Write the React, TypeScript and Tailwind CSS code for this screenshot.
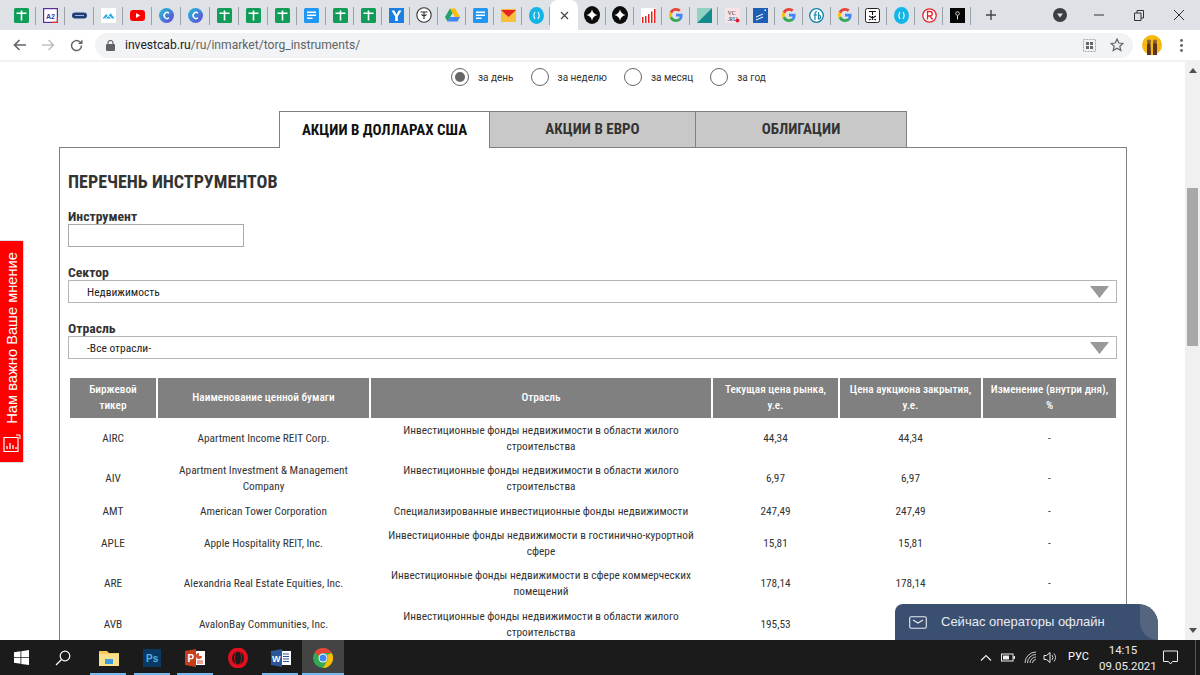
import React from "react";

const Sheet = () => (
  <svg width="15" height="15" viewBox="0 0 15 15"><rect width="15" height="15" rx="1.5" fill="#0f9d58" /><path d="M6.700 2.500h1.600v2H12.500v1.600H8.300v6.400H6.700V6.100H2.500V4.500h4.200z" fill="#fff" /></svg>
);
const Doc = () => (
  <svg width="15" height="15" viewBox="0 0 15 15"><rect width="15" height="15" rx="1.5" fill="#2196f3" /><path d="M3 3.5h9v1.5H3zM3 6.5h9V8H3zM3 9.5h5.5V11H3z" fill="#fff" /></svg>
);
const Canva = () => (
  <svg width="15" height="15" viewBox="0 0 15 15"><defs><linearGradient id="cg" x1="0" y1="0" x2="1" y2="1"><stop offset="0" stopColor="#1fc4d6" /><stop offset="1" stopColor="#6a3fd8" /></linearGradient></defs><circle cx="7.5" cy="7.5" r="7.5" fill="url(#cg)" /><path d="M10 5.2A3 3 0 1 0 10 9.8" fill="none" stroke="#fff" strokeWidth="1.4" /></svg>
);
const GLogo = () => (
  <svg width="14" height="14" viewBox="0 0 48 48">
    <path fill="#EA4335" d="M24 9.5c3.5 0 6.700 1.300 9.100 3.500l6.800-6.800C35.800 2.400 30.300 0 24 0 14.600 0 6.500 5.400 2.600 13.200l7.900 6.100C12.400 13.700 17.700 9.500 24 9.500z" />
    <path fill="#4285F4" d="M46.500 24.500c0-1.600-.1-3.100-.4-4.500H24v9h12.700c-.6 3-2.200 5.500-4.700 7.200l7.700 6c4.400-4.100 6.800-10.200 6.800-17.700z" />
    <path fill="#FBBC05" d="M10.500 28.700c-.5-1.400-.8-3-.8-4.700s.3-3.200.8-4.700l-7.900-6.100C1 16.500 0 20.100 0 24s1 7.500 2.600 10.800l7.900-6.100z" />
    <path fill="#34A853" d="M24 48c6.500 0 11.900-2.100 15.900-5.800l-7.700-6c-2.100 1.400-4.900 2.300-8.200 2.300-6.300 0-11.600-4.200-13.500-9.800l-7.900 6.100C6.500 42.600 14.600 48 24 48z" />
  </svg>
);
const BlueRing = () => (
  <svg width="15" height="17" viewBox="0 0 15 17"><ellipse cx="7.500" cy="8.500" rx="7.500" ry="8.500" fill="#12b5e5" /><path d="M6 5C4.700 7 4.700 10 6 12M9 5c1.300 2 1.300 5 0 7" fill="none" stroke="#fff" strokeWidth="1.100" /></svg>
);
const BlackStar = () => (
  <svg width="16" height="18" viewBox="0 0 16 18"><ellipse cx="8" cy="9" rx="8" ry="9" fill="#0c0c0c" /><path d="M8 3.500 9.500 7.500 13.500 9 9.500 10.500 8 14.500 6.500 10.500 2.500 9 6.500 7.500z" fill="#fff" /><circle cx="8" cy="9" r="2.800" fill="#fff" /></svg>
);

const icons: React.ReactNode[] = [
  <Sheet />,
  <svg width="15" height="15" viewBox="0 0 15 15"><rect x=".6" y=".6" width="13.800" height="13.800" fill="#fff" stroke="#5b2d9c" strokeWidth="1.200" /><path d="M14.400 9v5.400H9" fill="none" stroke="#e5342b" strokeWidth="1.200" /><text x="3" y="10.500" fontSize="7" fontWeight="700" fill="#3a3a9c" fontFamily="Liberation Sans">A2</text></svg>,
  <svg width="15" height="15" viewBox="0 0 15 15"><rect y="4.500" width="15" height="6" rx="3" fill="#1e3f7a" /><path d="M3 7.500h9" stroke="#9db7e0" strokeWidth="1" /></svg>,
  <svg width="15" height="15" viewBox="0 0 15 15"><rect width="15" height="15" fill="#fff" /><path d="M1.500 10.500 5 6l2.500 2.500L9.500 5l4 5.500z" fill="#2aa8e6" /><path d="M3.500 11l4-3.300 4 3.300" fill="none" stroke="#fff" strokeWidth="1" /></svg>,
  <svg width="15" height="15" viewBox="0 0 15 15"><rect y="2" width="15" height="11" rx="3" fill="#f00" /><path d="M6 5v5l4.200-2.500z" fill="#fff" /></svg>,
  <Canva />, <Canva />, <Sheet />, <Sheet />, <Sheet />, <Doc />, <Sheet />, <Sheet />,
  <svg width="15" height="15" viewBox="0 0 15 15"><rect width="15" height="15" fill="#1a7fe0" /><path d="M2.500 2.500h2.800l2.200 4 2.200-4h2.800L8.800 8.500v4.500H6.200V8.500z" fill="#fff" /></svg>,
  <svg width="16" height="16" viewBox="0 0 16 16"><circle cx="8" cy="8" r="7.200" fill="#fff" stroke="#333" strokeWidth="1.100" /><path d="M4.500 5h7M8 5v7M5.500 7.500c1.500 1.300 3.500 1.300 5 0" fill="none" stroke="#333" strokeWidth="1.100" /></svg>,
  <svg width="15" height="14" viewBox="0 0 15 14"><path d="M5 .5h5L15 9l-2.500 4.500L7.500 5z" fill="#fbbc04" /><path d="M5 .5 0 9l2.500 4.500L7.500 5z" fill="#1fa463" /><path d="M2.500 13.500h10L15 9H5z" fill="#4285f4" /></svg>,
  <Doc />,
  <svg width="15" height="15" viewBox="0 0 15 15"><rect y="1" width="15" height="13" fill="#f6bf3c" /><path d="M0 2h15L7.500 9z" fill="#e8231f" /></svg>,
  <BlueRing />,
];
const icons2: React.ReactNode[] = [
  <BlackStar />, <BlackStar />,
  <svg width="15" height="15" viewBox="0 0 15 15"><rect width="15" height="15" fill="#fff" /><path d="M1 9h1.500v6H1zM4 8h1.500v7H4zM7 6h1.500v9H7zM10 3.500h1.500V15H10zM13 1h1.500v14H13z" fill="#e52222" /></svg>,
  <GLogo />,
  <svg width="15" height="15" viewBox="0 0 15 15"><path d="M0 0h15L0 15z" fill="#8fd3c0" /><path d="M15 0v15H0z" fill="#138a8e" /></svg>,
  <svg width="15" height="15" viewBox="0 0 15 15"><rect width="15" height="15" fill="#f8e3e6" /><text x="2.500" y="6.500" fontSize="6" fontFamily="Liberation Serif" fill="#333">VC</text><text x="2.500" y="12.500" fontSize="6" fontFamily="Liberation Serif" fill="#333">.RU</text><circle cx="12.500" cy="12.500" r="2" fill="#e01b2f" /></svg>,
  <svg width="15" height="15" viewBox="0 0 15 15"><rect width="15" height="15" fill="#1d5fb4" /><path d="M3 9l7-3M3 12l7-3" stroke="#fff" strokeWidth="1" /><rect x="11.500" y="1.500" width="1.500" height="1.500" fill="#fff" /></svg>,
  <GLogo />,
  <svg width="15" height="15" viewBox="0 0 15 15"><circle cx="7.500" cy="7.500" r="6.800" fill="#fff" stroke="#0e7fa8" strokeWidth="1.300" /><path d="M6 12V6c0-2 1-2.500 2-2.500M4.500 7H8M9.500 4v7c1.800 0 2-1 2-2s-.5-2-2-2" fill="none" stroke="#0e7fa8" strokeWidth="1.100" /></svg>,
  <GLogo />,
  <svg width="15" height="15" viewBox="0 0 15 15"><rect x=".5" y=".5" width="14" height="14" rx="2" fill="#fff" stroke="#222" /><path d="M4 3.500h7M7.500 3.500V7M4 8l7 4M11 8l-7 4M7.500 8v4" stroke="#111" strokeWidth="1.100" /></svg>,
  <BlueRing />,
  <svg width="15" height="15" viewBox="0 0 15 15"><circle cx="7.500" cy="7.500" r="6.700" fill="#fff" stroke="#e0262c" strokeWidth="1.300" /><path d="M5.500 11.500v-8h2.500a2.200 2.200 0 0 1 0 4.500H5.500M8 8l2.500 3.500" fill="none" stroke="#e0262c" strokeWidth="1.300" /></svg>,
  <svg width="15" height="15" viewBox="0 0 15 15"><rect width="15" height="15" fill="#050505" /><circle cx="7.500" cy="5.500" r="1.800" fill="none" stroke="#ddd" strokeWidth=".9" /><path d="M7.500 7.500v4" stroke="#ddd" /></svg>,
];

const Fav = ({ children, w }: { children: React.ReactNode; w: string }) => (
  <div className={`flex items-center justify-center h-[30px] relative shrink-0 ${w}`}>
    {children}
    <span className="absolute right-0 top-[7px] h-[18px] w-px bg-[#9aa0a6]" />
  </div>
);

const rows = [
  ["AIRC", "Apartment Income REIT Corp.", "Инвестиционные фонды недвижимости в области жилого строительства", "44,34", "44,34", "-", "h-[41px]"],
  ["AIV", "Apartment Investment & Management Company", "Инвестиционные фонды недвижимости в области жилого строительства", "6,97", "6,97", "-", "h-[40px]"],
  ["AMT", "American Tower Corporation", "Специализированные инвестиционные фонды недвижимости", "247,49", "247,49", "-", "h-[25px]"],
  ["APLE", "Apple Hospitality REIT, Inc.", "Инвестиционные фонды недвижимости в гостинично-курортной сфере", "15,81", "15,81", "-", "h-[40px]"],
  ["ARE", "Alexandria Real Estate Equities, Inc.", "Инвестиционные фонды недвижимости в сфере коммерческих помещений", "178,14", "178,14", "-", "h-[40px]"],
  ["AVB", "AvalonBay Communities, Inc.", "Инвестиционные фонды недвижимости в области жилого строительства", "195,53", "195,53", "-", "h-[41px]"],
];
const heads = ["Биржевой тикер", "Наименование ценной бумаги", "Отрасль", "Текущая цена рынка, у.е.", "Цена аукциона закрытия, у.е.", "Изменение (внутри дня), %"];
const widths = ["w-[86px]", "w-[211px]", "w-[340px]", "w-[125px]", "w-[141px]", "w-[133px]"];

const Radio = ({ label, on }: { label: string; on?: boolean }) => (
  <div className="flex items-center gap-[9px]">
    <span className="w-[18px] h-[18px] rounded-full border border-[#666] flex items-center justify-center bg-white">
      {on && <span className="w-[10px] h-[10px] rounded-full bg-[#666]" />}
    </span>
    <span className="text-[10px] text-[#333] [font-stretch:100%]">{label}</span>
  </div>
);

const Select = ({ value }: { value: string }) => (
  <div className="w-[1049px] h-[23px] border border-[#b5b5b5] flex items-center justify-between pl-[18px] pr-[7px] text-[11.500px] text-[#222]">
    <span className="pt-[2px]">{value}</span>
    <svg width="19" height="12" viewBox="0 0 19 12"><path d="M0 0h19L9.500 12z" fill="#999" /></svg>
  </div>
);

export default function App() {
  return (
    <div className="w-[1200px] h-[675px] relative overflow-hidden flex flex-col bg-white font-['Roboto',sans-serif] [font-stretch:75%]">
      {/* tabs */}
      <div className="h-[30px] bg-[#dee1e6] flex items-center pl-[7px] shrink-0">
        <div className="flex">
          {icons.map((ic, i) => (
            <Fav key={i} w={i < 11 ? "w-[29px]" : "w-[28px]"}>{ic}</Fav>
          ))}
        </div>
        <div className="w-[28px] h-[30px] bg-white rounded-t-[8px] flex items-center justify-center shrink-0">
          <svg width="9" height="9" viewBox="0 0 9 9"><path d="M1 1l7 7M8 1 1 8" stroke="#444" strokeWidth="1.200" /></svg>
        </div>
        <div className="flex">
          {icons2.map((ic, i) => (
            <Fav key={i} w="w-[28.100px]">{ic}</Fav>
          ))}
        </div>
        <svg className="ml-[14px]" width="12" height="12" viewBox="0 0 12 12"><path d="M6 1v10M1 6h10" stroke="#444" strokeWidth="1.400" /></svg>
        <svg className="ml-[56px]" width="14" height="14" viewBox="0 0 14 14"><circle cx="7" cy="7" r="7" fill="#3c4043" /><path d="M4 5.500h6L7 9.500z" fill="#dee1e6" /></svg>
        <svg className="ml-[27px]" width="10" height="10" viewBox="0 0 10 10"><path d="M0 5h10" stroke="#333" /></svg>
        <svg className="ml-[30px]" width="10" height="11" viewBox="0 0 10 11"><path d="M.5 3h6.500v7.500H.5zM3 3V.5h6.500V8H7" fill="none" stroke="#333" /></svg>
        <svg className="ml-[30px]" width="10" height="10" viewBox="0 0 10 10"><path d="M0 0l10 10M10 0 0 10" stroke="#333" /></svg>
      </div>
      {/* toolbar */}
      <div className="h-[30px] bg-white flex items-center shrink-0 pl-[13px]">
        <svg width="13" height="12" viewBox="0 0 13 12"><path d="M13 6H1.500M6.500 1l-5 5 5 5" fill="none" stroke="#5f6368" strokeWidth="1.600" /></svg>
        <svg className="ml-[16px]" width="13" height="12" viewBox="0 0 13 12"><path d="M0 6h11.500M6.500 1l5 5-5 5" fill="none" stroke="#bdc1c6" strokeWidth="1.600" /></svg>
        <svg className="ml-[15px]" width="13" height="13" viewBox="0 0 13 13"><path d="M11.500 6.500a5 5 0 1 1-1.500-3.500" fill="none" stroke="#5f6368" strokeWidth="1.500" /><path d="M12.500 .5v4.500H8z" fill="#5f6368" /></svg>
        <div className="ml-[12px] w-[1038px] h-[25px] rounded-full bg-[#f1f3f4] flex items-center pl-[11px] pr-[9px]">
          <svg width="9" height="11" viewBox="0 0 9 11"><rect y="4" width="9" height="7" rx="1" fill="#5f6368" /><path d="M2 4.500V3a2.500 2.500 0 0 1 5 0v1.500" fill="none" stroke="#5f6368" strokeWidth="1.100" /></svg>
          <span className="ml-[10px] text-[12.100px] [font-stretch:100%] text-[#5f6368]"><span className="text-[#202124]">investcab.ru</span>/ru/inmarket/torg_instruments/</span>
          <svg className="ml-auto" width="13" height="13" viewBox="0 0 13 13"><rect x=".5" y=".5" width="12" height="12" fill="none" stroke="#aaa" strokeDasharray="2 1" /><path d="M3 3h3v3H3zM7 3h3v3H7zM3 7h3v3H3zM7 7h3v3H7z" fill="#666" /></svg>
          <svg className="ml-[14px]" width="14" height="14" viewBox="0 0 14 14"><path d="M7 1l1.800 4 4.200.4-3.200 2.800 1 4.300L7 10.300 3.200 12.500l1-4.300L1 5.400 5.200 5z" fill="none" stroke="#5f6368" strokeWidth="1.200" /></svg>
        </div>
        <svg className="ml-[9px]" width="20" height="20" viewBox="0 0 20 20"><circle cx="10" cy="10" r="10" fill="#f5b80f" /><path d="M5 20V10c0-3 3-3.500 3.500-1l.5 11zM11 20V9c.5-3 4-2.500 4 1v10z" fill="#5a3326" /><circle cx="7" cy="6.500" r="2" fill="#8a5a3c" /><circle cx="13" cy="6.500" r="2" fill="#8a5a3c" /></svg>
        <svg className="ml-[18px]" width="3" height="13" viewBox="0 0 3 13"><circle cx="1.500" cy="1.500" r="1.400" fill="#5f6368" /><circle cx="1.500" cy="6.500" r="1.400" fill="#5f6368" /><circle cx="1.500" cy="11.500" r="1.400" fill="#5f6368" /></svg>
      </div>
      <div className="h-[2px] bg-[#f1f1f1] shrink-0" />

      {/* page */}
      <div className="flex-1 flex min-h-0">
        <div className="flex-1 min-w-0 overflow-hidden bg-white">
          <div className="h-[20px] mt-[5px] flex ml-[451px] gap-[17px]">
            <Radio label="за день" on />
            <Radio label="за неделю" />
            <Radio label="за месяц" />
            <Radio label="за год" />
          </div>
          <div className="ml-[279px] mt-[24px] flex h-[37px] relative z-10 w-[628px] -mb-px">
            <div className="w-[210px] border-t border-l border-[#808080] bg-white flex items-center justify-center font-bold text-[15px] text-[#111]">АКЦИИ В ДОЛЛАРАХ США</div>
            <div className="w-[207px] border-t border-x border-b border-[#808080] bg-[#c8c8c8] flex items-center justify-center font-bold text-[15px] text-[#333]">АКЦИИ В ЕВРО</div>
            <div className="w-[211px] border-t border-r border-b border-[#808080] bg-[#c8c8c8] flex items-center justify-center font-bold text-[15px] text-[#333]">ОБЛИГАЦИИ</div>
          </div>
          <div className="ml-[59px] w-[1068px] border border-[#808080] px-[8px] pt-[23px] pb-[20px]">
            <h2 className="text-[18px] leading-[22px] font-bold text-[#333]">ПЕРЕЧЕНЬ ИНСТРУМЕНТОВ</h2>
            <div className="mt-[9px] pt-[6px] text-[13.700px] leading-[16px] font-bold text-[#333]">Инструмент</div>
            <div className="w-[176px] h-[23px] border border-[#aaa]" />
            <div className="mt-[11px] pt-[6px] text-[13.700px] leading-[16px] font-bold text-[#333]">Сектор</div>
            <Select value="Недвижимость" />
            <div className="mt-[11px] pt-[6px] text-[13.700px] leading-[16px] font-bold text-[#333]">Отрасль</div>
            <Select value="-Все отрасли-" />
            <table className="mt-[19px] border-separate border-spacing-x-[2px] border-spacing-y-0 table-fixed w-[1050px] text-[11.300px] leading-[16px] text-[#333]">
              <thead>
                <tr className="h-[40px]">
                  {heads.map((h, i) => (
                    <th key={i} className={`${widths[i]} bg-[#808080] text-white font-medium px-[6px] text-center align-middle`}>{h}</th>
                  ))}
                </tr>
              </thead>
              <tbody>
                {rows.map((r) => (
                  <tr key={r[0]} className={r[6]}>
                    {r.slice(0, 6).map((c, i) => (
                      <td key={i} className="text-center align-middle px-[8px]">{c}</td>
                    ))}
                  </tr>
                ))}
              </tbody>
            </table>
          </div>
        </div>
        {/* scrollbar */}
        <div className="w-[15px] bg-[#f0f0f0] flex flex-col items-center shrink-0 relative">
          <svg className="mt-[6px]" width="8" height="5" viewBox="0 0 8 5"><path d="M4 0l4 5H0z" fill="#505050" /></svg>
          <div className="w-[11px] h-[158px] bg-[#a8a8a8] mt-[115px]" />
          <svg className="mt-auto mb-[7px]" width="8" height="5" viewBox="0 0 8 5"><path d="M0 0h8L4 5z" fill="#505050" /></svg>
        </div>
      </div>

      {/* taskbar */}
      <div className="h-[35px] bg-[#1b1b1b] flex items-center shrink-0 relative text-white [font-stretch:100%]">
        <div className="w-[42px] flex justify-center">
          <svg width="15" height="15" viewBox="0 0 15 15"><path d="M0 2.200 6.500 1.300V7H0zM7.300 1.200 15 0v7H7.300zM0 7.800h6.500v5.900L0 12.800zM7.300 7.800H15V15l-7.700-1.100z" fill="#fff" /></svg>
        </div>
        <div className="w-[42px] flex justify-center">
          <svg width="16" height="16" viewBox="0 0 16 16"><circle cx="10" cy="6" r="4.800" fill="none" stroke="#fff" strokeWidth="1.200" /><path d="M6.500 9.500 1 15" stroke="#fff" strokeWidth="1.300" /></svg>
        </div>
        <div className="w-[3px]" />
        <div className="w-[43px] h-[35px] flex justify-center items-center relative">
          <svg width="20" height="18" viewBox="0 0 20 18"><path d="M0 2h8l2 2h10v13H0z" fill="#f5c95a" /><rect y="5" width="20" height="12" fill="#fbe08c" /><rect x="6" y="10" width="8" height="5" fill="#3b9bdc" /></svg>
          <span className="absolute bottom-0 left-[3px] w-[36px] h-[2px] bg-[#76b9ed]" />
        </div>
        <div className="w-[43px] h-[35px] flex justify-center items-center relative">
          <svg width="18" height="18" viewBox="0 0 18 18"><rect width="18" height="18" fill="#0a3a63" /><text x="3" y="13" fontSize="10" fontWeight="700" fill="#4fb3e8" fontFamily="Liberation Sans">Ps</text></svg>
          <span className="absolute bottom-0 left-[4px] w-[36px] h-[2px] bg-[#76b9ed]" />
        </div>
        <div className="w-[43px] h-[35px] flex justify-center items-center relative">
          <svg width="20" height="18" viewBox="0 0 20 18"><rect x="6" y="2" width="14" height="14" fill="#fff" /><path d="M14 4a3 3 0 1 0 3 3h-3z" fill="#d9492c" /><path d="M12 12h6M12 14h6" stroke="#d9492c" /><path d="M0 2 11 0v18L0 16z" fill="#c43e1c" /><text x="2.500" y="13" fontSize="10" fontWeight="700" fill="#fff" fontFamily="Liberation Sans">P</text></svg>
          <span className="absolute bottom-0 left-[4px] w-[36px] h-[2px] bg-[#76b9ed]" />
        </div>
        <div className="w-[43px] h-[35px] flex justify-center items-center">
          <svg width="20" height="20" viewBox="0 0 20 20"><ellipse cx="10" cy="10" rx="8" ry="8.500" fill="none" stroke="#e0101f" strokeWidth="4" /><ellipse cx="10" cy="10" rx="3.500" ry="7" fill="none" stroke="#c40d1a" strokeWidth="1" /></svg>
        </div>
        <div className="w-[43px] h-[35px] flex justify-center items-center relative">
          <svg width="20" height="18" viewBox="0 0 20 18"><rect x="6" y="2" width="14" height="14" fill="#fff" /><path d="M12 5h6M12 7.500h6M12 10h6M12 12.500h6" stroke="#2b5797" /><path d="M0 2 11 0v18L0 16z" fill="#2b5797" /><text x="1" y="12.500" fontSize="9" fontWeight="700" fill="#fff" fontFamily="Liberation Sans">W</text></svg>
          <span className="absolute bottom-0 left-[3px] w-[36px] h-[2px] bg-[#76b9ed]" />
        </div>
        <div className="w-[42px] h-[35px] flex justify-center items-center relative bg-[#444]">
          <svg width="20" height="20" viewBox="0 0 20 20"><circle cx="10" cy="10" r="10" fill="#34a853" /><path d="M10 0a10 10 0 0 1 8.700 5H10a5 5 0 0 0-4.500 2.800L1.600 4.600A10 10 0 0 1 10 0z" fill="#ea4335" /><path d="M18.700 5A10 10 0 0 1 10 20l4.300-7.500A5 5 0 0 0 14 7z" fill="#fbbc05" /><circle cx="10" cy="10" r="4.500" fill="#fff" /><circle cx="10" cy="10" r="3.500" fill="#4285f4" /></svg>
          <span className="absolute bottom-0 left-0 w-full h-[2px] bg-[#76b9ed]" />
        </div>

        <div className="ml-auto flex items-center h-[35px]">
          <svg width="12" height="7" viewBox="0 0 12 7"><path d="M1 6.500l5-5 5 5" fill="none" stroke="#eee" strokeWidth="1.200" /></svg>
          <svg className="ml-[9px]" width="14" height="9" viewBox="0 0 14 9"><rect x=".5" y="1" width="11.500" height="7" fill="none" stroke="#eee" /><rect x="2" y="2.500" width="6" height="4" fill="#eee" /><rect x="12.500" y="3" width="1.500" height="3" fill="#eee" /></svg>
          <svg className="ml-[9px]" width="13" height="13" viewBox="0 0 13 13"><path d="M1 12a11 11 0 0 1 11-11M3.500 12a8.500 8.500 0 0 1 8.500-8.500M6 12a6 6 0 0 1 6-6M8.500 12a3.500 3.500 0 0 1 3.500-3.500" fill="none" stroke="#ddd" strokeWidth=".9" /></svg>
          <svg className="ml-[6px]" width="15" height="13" viewBox="0 0 15 13"><path d="M1 4.500h2.500L7 1.500v10L3.500 8.500H1z" fill="none" stroke="#eee" /><path d="M9 4a4 4 0 0 1 0 5M11 2.500a6.500 6.500 0 0 1 0 8" fill="none" stroke="#ccc" /></svg>
          <span className="ml-[10px] w-[20px] text-[11px] text-center">РУС</span>
          <div className="ml-[11px] w-[48px] text-[11.500px] leading-[16px] text-center text-[#eee]">
            <div>14:15</div>
            <div>09.05.2021</div>
          </div>
          <svg className="ml-[16px]" width="15" height="15" viewBox="0 0 15 15"><path d="M.5 1h14v10.500H9.500L7.500 14 5.500 11.500H.5z" fill="none" stroke="#eee" /></svg>
          <div className="ml-[17px] w-[5px] h-[35px] border-l border-[#555]" />
        </div>
      </div>

      {/* feedback tab */}
      <div className="absolute left-0 top-[240px] w-[24px] h-[223px] bg-[#f00] border-t border-r border-b border-[#ddd] rounded-r-[2px] flex flex-col items-center pt-[11px] text-white [font-stretch:100%]">
        <span className="[writing-mode:vertical-rl] rotate-180 text-[14.700px] leading-[22px] font-['Liberation_Sans',sans-serif] whitespace-nowrap">Нам важно Ваше мнение</span>
        <svg className="mt-[10px]" width="18" height="19" viewBox="0 0 18 19"><path d="M1 3.500h14v14H1z" fill="none" stroke="#fff" strokeWidth="1.200" /><path d="M4 15v-3M7 15V9M10 15v-4M13 15v-2" stroke="#fff" strokeWidth="1.300" /><path d="M13 1h4v4" fill="none" stroke="#fff" /></svg>
      </div>

      {/* chat widget */}
      <div className="absolute left-[895px] top-[604px] w-[263px] h-[36px] bg-[#3b4f70] rounded-tl-[8px] rounded-tr-[20px] overflow-hidden flex items-center pl-[14px] text-[#e8ecf2] font-['Liberation_Sans',sans-serif] [font-stretch:100%] text-[13px]">
        <span className="absolute -right-[18px] -top-[20px] w-[36px] h-[56px] rounded-full bg-[#55647f]" />
        <svg width="18" height="13" viewBox="0 0 18 13"><rect x=".7" y=".7" width="16.600" height="11.600" rx="1.500" fill="none" stroke="#e8ecf2" strokeWidth="1.100" /><path d="M4 4l5 3 5-3" fill="none" stroke="#e8ecf2" strokeWidth="1.100" /></svg>
        <span className="ml-[14px]">Сейчас операторы офлайн</span>
      </div>
    </div>
  );
}
